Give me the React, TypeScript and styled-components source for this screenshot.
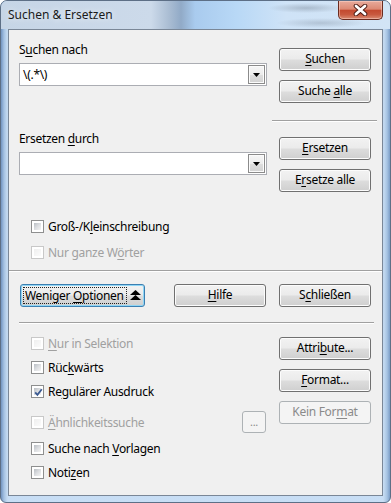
import React from 'react';
import styled, { createGlobalStyle } from 'styled-components';

const GlobalStyle = createGlobalStyle`
	html, body {
		margin: 0;
		padding: 0;
		background: #ffffff;
	}
	body {
		font-family: 'Noto Sans', 'Segoe UI', sans-serif;
		font-size: 12px;
		letter-spacing: -0.3px;
		color: #000;
	}
`;

const Window = styled.div`
	width: 391px;
	height: 503px;
	box-sizing: border-box;
	display: flex;
	flex-direction: column;
	border: 1px solid #5d6f86;
	border-radius: 7px 7px 6px 6px;
	padding: 0 7px 6px;
	overflow: hidden;
	background:
		linear-gradient(90deg, #7294c0 0px, #a4c1e2 3px, #c3d9f0 6px, rgba(195, 217, 240, 0) 7px),
		linear-gradient(270deg, #7b9dc7 0px, #a7c4e3 3px, #c3d9f0 6px, rgba(195, 217, 240, 0) 7px),
		linear-gradient(180deg, #c3d8ee 0%, #bcd4ee 60%, #c8def5 100%);
`;

const TitleBar = styled.div`
	height: 28px;
	margin: 0 -7px;
	padding: 0 7px;
	display: flex;
	align-items: flex-start;
	background:
		radial-gradient(ellipse 38px 5px at 305px 7px, rgba(70, 80, 95, 0.28), rgba(70, 80, 95, 0)),
		radial-gradient(ellipse 45px 5px at 320px 22px, rgba(70, 80, 95, 0.22), rgba(70, 80, 95, 0)),
		linear-gradient(90deg, #c6d5e6 0px, #ccdaea 150px, #aabdd3 168px, #91aac7 180px, #a9cbee 194px, #b8d8f6 235px, #cfe3f7 285px, #d2e4f5 391px);
`;

const Title = styled.div`
	padding-top: 6px;
	line-height: 16px;
	color: #1a1a1a;
	letter-spacing: 0;
	text-shadow: 0 0 6px rgba(255, 255, 255, 0.9);
`;

const CloseButton = styled.div`
	margin-left: auto;
	width: 45px;
	height: 19px;
	box-sizing: border-box;
	border: 1px solid #6a2b1f;
	border-top: none;
	border-radius: 0 0 5px 5px;
	display: flex;
	align-items: center;
	justify-content: center;
	background: linear-gradient(180deg, #e8ab9c 0%, #dc8974 45%, #c34a30 52%, #c8593f 75%, #d98b72 100%);
	box-shadow: inset 0 0 0 1px rgba(255, 220, 210, 0.45);
`;

const Client = styled.div`
	flex: 1;
	display: flex;
	flex-direction: column;
	background: #f0f0f0;
	border: 1px solid #7a8797;
`;

const Section = styled.div<{ $bottom?: number }>`
	display: flex;
	gap: 12px;
	padding: 0 11px ${({ $bottom }) => $bottom ?? 0}px 10px;
`;

const LeftCol = styled.div<{ $top: number }>`
	width: 248px;
	display: flex;
	flex-direction: column;
	padding-top: ${({ $top }) => $top}px;
`;

const RightCol = styled.div<{ $top: number }>`
	width: 92px;
	display: flex;
	flex-direction: column;
	gap: 9px;
	padding-top: ${({ $top }) => $top}px;
`;

const FieldLabel = styled.div<{ $top?: number }>`
	height: 16px;
	line-height: 16px;
	margin-top: ${({ $top }) => $top ?? 0}px;
	margin-bottom: 5px;
	white-space: nowrap;
`;

const Combo = styled.div`
	height: 23px;
	box-sizing: border-box;
	border: 1px solid #abadb3;
	background: #fff;
	display: flex;
	align-items: center;
	padding-left: 3px;
`;

const ComboText = styled.span`
	flex: 1;
	line-height: 16px;
`;

const DropButton = styled.div`
	width: 17px;
	height: 19px;
	box-sizing: border-box;
	margin-right: 1px;
	border: 1px solid #8b8b8b;
	background: linear-gradient(180deg, #f6f6f6 0%, #ececec 50%, #dedede 51%, #d2d2d2 100%);
	box-shadow: inset 0 0 0 1px #fbfbfb;
	display: flex;
	align-items: center;
	justify-content: center;
`;

const Button = styled.div<{ $disabled?: boolean }>`
	height: 23px;
	box-sizing: border-box;
	border: 1px solid ${({ $disabled }) => ($disabled ? '#adb2b5' : '#707070')};
	border-radius: 3px;
	text-align: center;
	line-height: 20px;
	white-space: nowrap;
	color: ${({ $disabled }) => ($disabled ? '#8a8a8a' : '#000')};
	background: ${({ $disabled }) =>
		$disabled
			? '#f4f4f4'
			: 'linear-gradient(180deg, #f2f2f2 0%, #ebebeb 48%, #dddddd 52%, #cfcfcf 100%)'};
	box-shadow: inset 0 0 0 1px ${({ $disabled }) => ($disabled ? '#f4f4f4' : '#fcfcfc')};
`;

const MoreButton = styled(Button)`
	width: 125px;
	margin-right: 16px;
	display: flex;
	align-items: center;
	padding: 0 3px;
	border-color: #3c7fb1;
	box-shadow: inset 0 0 0 1px #8fd6f6;

	svg {
		flex: none;
		margin-left: 4px;
	}
`;

const FocusText = styled.span`
	line-height: 15px;
	padding: 0 2px 0 1px;
	outline: 1px dotted #222;
`;

const RowButton = styled(Button)`
	width: 92px;
`;

const SmallButton = styled(Button)`
	width: 24px;
	height: 22px;
	line-height: 19px;
	margin-left: auto;
	margin-right: 1px;
	font-size: 11px;
`;

const RightSep = styled.div`
	margin: 8px -6px 6px -7px;
	border-top: 1px solid #a0a0a0;
	border-bottom: 1px solid #ffffff;
`;

const FullSep = styled.div<{ $left?: number; $right?: number }>`
	margin: 0 ${({ $right }) => $right ?? 0}px 0 ${({ $left }) => $left ?? 0}px;
	border-top: 1px solid #a0a0a0;
	border-bottom: 1px solid #ffffff;
`;

const CheckList = styled.div<{ $top: number; $gap?: number }>`
	display: flex;
	flex-direction: column;
	gap: ${({ $gap }) => $gap ?? 6}px;
	margin-top: ${({ $top }) => $top}px;
	padding-left: 12px;
`;

const CheckRow = styled.div<{ $disabled?: boolean }>`
	height: 18px;
	display: flex;
	align-items: center;
	gap: 4px;
	white-space: nowrap;
	color: ${({ $disabled }) => ($disabled ? '#a0a0a0' : '#000')};
`;

const SimilarRow = styled(CheckRow)`
	height: 22px;
	margin-top: 5px;
`;

const Box = styled.span<{ $disabled?: boolean }>`
	flex: none;
	width: 13px;
	height: 13px;
	box-sizing: border-box;
	border: 1px solid ${({ $disabled }) => ($disabled ? '#c8c8c8' : '#8e8f8f')};
	background: #fff;
	padding: 2px;
	display: flex;
	position: relative;

	&::before {
		content: '';
		flex: 1;
		background: ${({ $disabled }) =>
			$disabled
				? 'linear-gradient(135deg, #efefef, #fbfbfb)'
				: 'linear-gradient(135deg, #b9bec4 0%, #dcdee1 50%, #f4f4f4 100%)'};
	}

	svg {
		position: absolute;
		left: 1px;
		top: 1px;
	}
`;

const ButtonRow = styled.div`
	display: flex;
	gap: 13px;
	padding: 12px 0 0 11px;
`;

const BottomSepWrap = styled.div`
	padding-top: 15px;
`;

const Key = styled.u`
	text-decoration: underline;
	text-underline-offset: 2px;
`;

const Tri: React.FC = () => (
	<svg width="7" height="4" viewBox="0 0 7 4">
		<polygon points="0,0 7,0 3.5,4" fill="#000" />
	</svg>
);

const CloseX: React.FC = () => (
	<svg width="17" height="12" viewBox="0 0 17 12">
		<path d="M4 2 L13 10 M13 2 L4 10" stroke="#4a1a12" strokeWidth="4.6" strokeLinecap="round" />
		<path d="M4 2 L13 10 M13 2 L4 10" stroke="#ffffff" strokeWidth="2.8" strokeLinecap="round" />
	</svg>
);

const CollapseIcon: React.FC = () => (
	<svg width="11" height="11" viewBox="0 0 11 11">
		<polygon points="5.5,0 11,5 0,5" fill="#000" />
		<polygon points="5.5,5 11,10 0,10" fill="#000" />
	</svg>
);

const Check: React.FC<{ label: React.ReactNode; checked?: boolean; disabled?: boolean }> = ({
	label,
	checked,
	disabled,
}) => (
	<CheckRow $disabled={disabled}>
		<Box $disabled={disabled}>
			{checked && (
				<svg width="11" height="11" viewBox="0 0 11 11">
					<path d="M2.2 5.4 L4.4 7.8 L8.8 2.2" fill="none" stroke="#3b5a92" strokeWidth="1.8" />
				</svg>
			)}
		</Box>
		<span>{label}</span>
	</CheckRow>
);

export default function App() {
	return (
		<>
			<GlobalStyle />
			<Window>
				<TitleBar>
					<Title>Suchen &amp; Ersetzen</Title>
					<CloseButton>
						<CloseX />
					</CloseButton>
				</TitleBar>
				<Client>
					<Section $bottom={9}>
						<LeftCol $top={12}>
							<FieldLabel>
								S<Key>u</Key>chen nach
							</FieldLabel>
							<Combo>
								<ComboText>\(.*\)</ComboText>
								<DropButton>
									<Tri />
								</DropButton>
							</Combo>
							<FieldLabel $top={45}>
								Ersetzen <Key>d</Key>urch
							</FieldLabel>
							<Combo>
								<ComboText />
								<DropButton>
									<Tri />
								</DropButton>
							</Combo>
							<CheckList $top={42} $gap={8}>
								<Check label={<>Groß-/K<Key>l</Key>einschreibung</>} />
								<Check disabled label={<>Nur ganze W<Key>ö</Key>rter</>} />
							</CheckList>
						</LeftCol>
						<RightCol $top={18}>
							<Button>
								<Key>S</Key>uchen
							</Button>
							<Button>
								Suche <Key>a</Key>lle
							</Button>
							<RightSep />
							<Button>
								<Key>E</Key>rsetzen
							</Button>
							<Button>
								E<Key>r</Key>setze alle
							</Button>
						</RightCol>
					</Section>
					<FullSep />
					<ButtonRow>
						<MoreButton>
							<FocusText>
								Weniger <Key>O</Key>ptionen
							</FocusText>
							<CollapseIcon />
						</MoreButton>
						<RowButton>
							<Key>H</Key>ilfe
						</RowButton>
						<RowButton>
							S<Key>c</Key>hließen
						</RowButton>
					</ButtonRow>
					<BottomSepWrap>
						<FullSep $left={10} $right={8} />
					</BottomSepWrap>
					<Section>
						<LeftCol $top={0}>
							<CheckList $top={10}>
								<Check disabled label={<><Key>N</Key>ur in Selektion</>} />
								<Check label={<>Rüc<Key>k</Key>wärts</>} />
								<Check checked label={<>Re<Key>g</Key>ulärer Ausdruck</>} />
								<SimilarRow $disabled>
									<Box $disabled />
									<span>
										<Key>Ä</Key>hnlichkeitssuche
									</span>
									<SmallButton $disabled>...</SmallButton>
								</SimilarRow>
								<Check label={<>Suche nach <Key>V</Key>orlagen</>} />
								<Check label={<>Noti<Key>z</Key>en</>} />
							</CheckList>
						</LeftCol>
						<RightCol $top={13}>
							<Button>
								Attri<Key>b</Key>ute...
							</Button>
							<Button>
								<Key>F</Key>ormat...
							</Button>
							<Button $disabled>
								Kein For<Key>m</Key>at
							</Button>
						</RightCol>
					</Section>
				</Client>
			</Window>
		</>
	);
}
